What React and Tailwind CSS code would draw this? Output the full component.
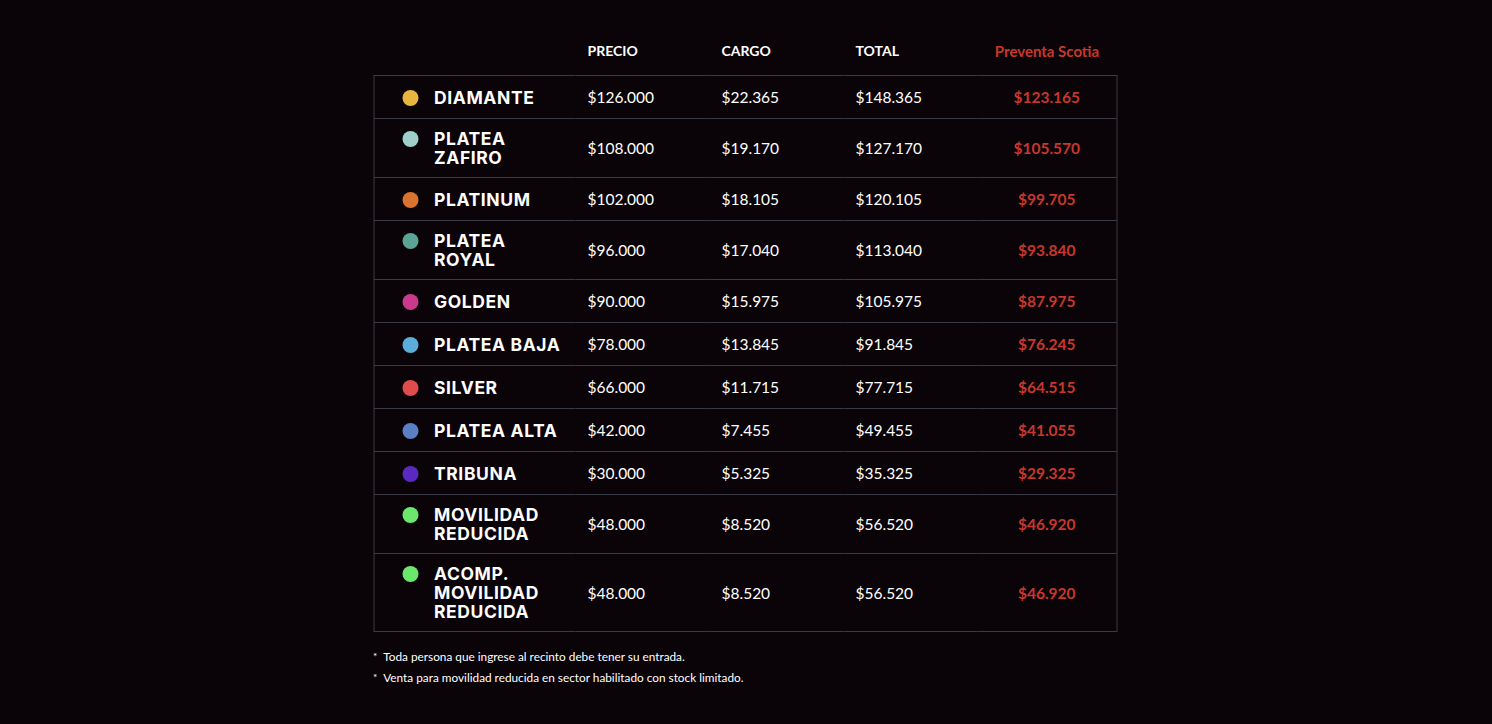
import React from "react";

const rows = [
  { name: ["DIAMANTE"], color: "bg-[#e8b63f]", precio: "$126.000", cargo: "$22.365", total: "$148.365", preventa: "$123.165" },
  { name: ["PLATEA", "ZAFIRO"], color: "bg-[#9fcfca]", precio: "$108.000", cargo: "$19.170", total: "$127.170", preventa: "$105.570" },
  { name: ["PLATINUM"], color: "bg-[#d9732f]", precio: "$102.000", cargo: "$18.105", total: "$120.105", preventa: "$99.705" },
  { name: ["PLATEA", "ROYAL"], color: "bg-[#5ba394]", precio: "$96.000", cargo: "$17.040", total: "$113.040", preventa: "$93.840" },
  { name: ["GOLDEN"], color: "bg-[#c93a8c]", precio: "$90.000", cargo: "$15.975", total: "$105.975", preventa: "$87.975" },
  { name: ["PLATEA BAJA"], color: "bg-[#5baed9]", precio: "$78.000", cargo: "$13.845", total: "$91.845", preventa: "$76.245" },
  { name: ["SILVER"], color: "bg-[#e04b4b]", precio: "$66.000", cargo: "$11.715", total: "$77.715", preventa: "$64.515" },
  { name: ["PLATEA ALTA"], color: "bg-[#5b7fc4]", precio: "$42.000", cargo: "$7.455", total: "$49.455", preventa: "$41.055" },
  { name: ["TRIBUNA"], color: "bg-[#5a2ac0]", precio: "$30.000", cargo: "$5.325", total: "$35.325", preventa: "$29.325" },
  { name: ["MOVILIDAD", "REDUCIDA"], color: "bg-[#6be86b]", precio: "$48.000", cargo: "$8.520", total: "$56.520", preventa: "$46.920" },
  { name: ["ACOMP.", "MOVILIDAD", "REDUCIDA"], color: "bg-[#6be86b]", precio: "$48.000", cargo: "$8.520", total: "$56.520", preventa: "$46.920" },
];

const notes = [
  "Toda persona que ingrese al recinto debe tener su entrada.",
  "Venta para movilidad reducida en sector habilitado con stock limitado.",
];

export default function App() {
  return (
    <div className="min-h-[724px] bg-[#0a0307] pt-[41px] font-['Lato',sans-serif] text-white">
      <div className="mx-auto w-[743px] -translate-x-[1.5px]">
        <table className="w-full border-collapse table-fixed">
          <colgroup>
            <col className="w-[202px]" />
            <col className="w-[134px]" />
            <col className="w-[134px]" />
            <col className="w-[134px]" />
            <col className="w-[139px]" />
          </colgroup>
          <thead>
            <tr className="text-[14px] font-bold leading-[20px]">
              <th className="pb-[14px]"></th>
              <th className="pb-[14px] pl-3 text-left">PRECIO</th>
              <th className="pb-[14px] pl-3 text-left">CARGO</th>
              <th className="pb-[14px] pl-3 text-left">TOTAL</th>
              <th className="pb-[14px] text-center text-[15px] text-[#c8372d]">Preventa Scotia</th>
            </tr>
          </thead>
          <tbody className="border border-[#3b3b45]">
            {rows.map((r, i) => (
              <tr key={i} className="border-b border-[#3b3b45] text-[15.5px] leading-[22px]">
                <td className="py-[10px] pl-[28px] align-middle">
                  <div className="flex items-start gap-4">
                    <span className={`mt-[2px] h-4 w-4 shrink-0 rounded-full ${r.color}`} />
                    <div className="font-['Inter',sans-serif] text-[17.5px] font-bold leading-[19px] tracking-[0.6px]">
                      {r.name.map((n) => (
                        <div key={n}>{n}</div>
                      ))}
                    </div>
                  </div>
                </td>
                <td className="py-[10px] pl-3 align-middle">{r.precio}</td>
                <td className="py-[10px] pl-3 align-middle">{r.cargo}</td>
                <td className="py-[10px] pl-3 align-middle">{r.total}</td>
                <td className="py-[10px] text-center align-middle font-bold text-[#c8372d]">{r.preventa}</td>
              </tr>
            ))}
          </tbody>
        </table>

        <ul className="mt-[17px] flex flex-col gap-[6px] text-[11.8px] leading-[15px]">
          {notes.map((n) => (
            <li key={n} className="flex gap-[6px]">
              <span className="text-[10px]">*</span>
              <span>{n}</span>
            </li>
          ))}
        </ul>
      </div>
    </div>
  );
}
